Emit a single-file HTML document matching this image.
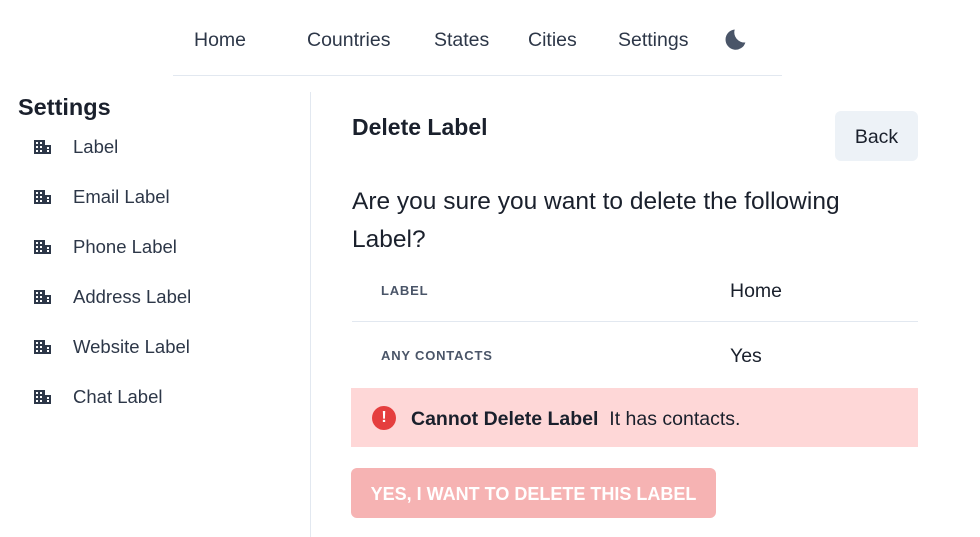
<!DOCTYPE html>
<html><head><meta charset="utf-8"><style>
body{margin:0;width:980px;height:537px;overflow:hidden;background:#fff;font-family:"Liberation Sans",sans-serif;color:#1a202c;position:relative}
.a{position:absolute;white-space:nowrap}
.nav{font-size:19.5px;color:#2d3748;top:29px}
.side{font-size:18.5px;color:#2d3748;left:73px}
.ic{position:absolute;left:34px;width:17px;height:14px}
</style></head><body>
<div class="a nav" style="left:194px">Home</div>
<div class="a nav" style="left:307px">Countries</div>
<div class="a nav" style="left:434px">States</div>
<div class="a nav" style="left:528px">Cities</div>
<div class="a nav" style="left:618px">Settings</div>
<svg class="a" style="left:724px;top:25px" width="27" height="27" viewBox="0 0 24 24"><path d="M19 15.5A9 9 0 0 1 9.5 4 9 9 0 1 0 19 15.5z" fill="#4a5568"/></svg>
<div class="a" style="left:173px;top:75px;width:609px;height:1px;background:#e2e8f0"></div>

<div class="a" style="left:18px;top:94px;font-size:23.5px;font-weight:bold">Settings</div>
<div class="a" style="left:310px;top:92px;width:1px;height:445px;background:#e2e8f0"></div>

<div id="sb"></div>
<script>
var n=["Label","Email Label","Phone Label","Address Label","Website Label","Chat Label"],h="";
n.forEach(function(t,i){var y=147+50*i;
h+='<svg class="ic" style="top:'+(y-7)+'px" viewBox="0 0 17 14"><path d="M0 0h11v14H0z M11 5h6v9h-6z" fill="#2d3748"/><path d="M2 2h2v2H2zM6 2h2v2H6zM2 6h2v2H2zM6 6h2v2H6zM2 10h2v2H2zM6 10h2v2H6zM13 7h2v2h-2zM13 10h2v2h-2z" fill="#fff"/></svg><div class="a side" style="top:'+(y-11)+'px">'+t+'</div>';});
document.getElementById("sb").innerHTML=h;
</script>

<div class="a" style="left:352px;top:114px;font-size:23px;font-weight:bold">Delete Label</div>
<div class="a" style="left:835px;top:111px;width:83px;height:50px;background:#edf2f7;border-radius:6px;font-size:19.5px;line-height:52px;text-align:center;color:#1a202c">Back</div>
<div class="a" style="left:352px;top:183px;font-size:24.5px;line-height:38px;color:#1a202c;white-space:normal;width:540px">Are you sure you want to delete the following Label?</div>

<div class="a" style="left:381px;top:283px;font-size:13px;font-weight:bold;color:#4a5568;letter-spacing:.8px">LABEL</div>
<div class="a" style="left:730px;top:280px;font-size:19.5px">Home</div>
<div class="a" style="left:352px;top:321px;width:566px;height:1px;background:#e2e8f0"></div>
<div class="a" style="left:381px;top:348px;font-size:13px;font-weight:bold;color:#4a5568;letter-spacing:.8px">ANY CONTACTS</div>
<div class="a" style="left:730px;top:345px;font-size:19.5px">Yes</div>

<div class="a" style="left:351px;top:388px;width:567px;height:59px;background:#fed7d7"></div>
<div class="a" style="left:372px;top:406px;width:24px;height:24px;border-radius:50%;background:#e53e3e;color:#fff;font-weight:bold;font-size:16px;text-align:center;line-height:24px">!</div>
<div class="a" style="left:411px;top:408px;font-size:19.5px"><b>Cannot Delete Label</b>&nbsp; It has contacts.</div>

<div class="a" style="left:351px;top:468px;width:365px;height:50px;background:#f6b3b3;border-radius:6px;color:#fff;font-weight:bold;font-size:18px;line-height:52px;text-align:center">YES, I WANT TO DELETE THIS LABEL</div>
</body></html>
